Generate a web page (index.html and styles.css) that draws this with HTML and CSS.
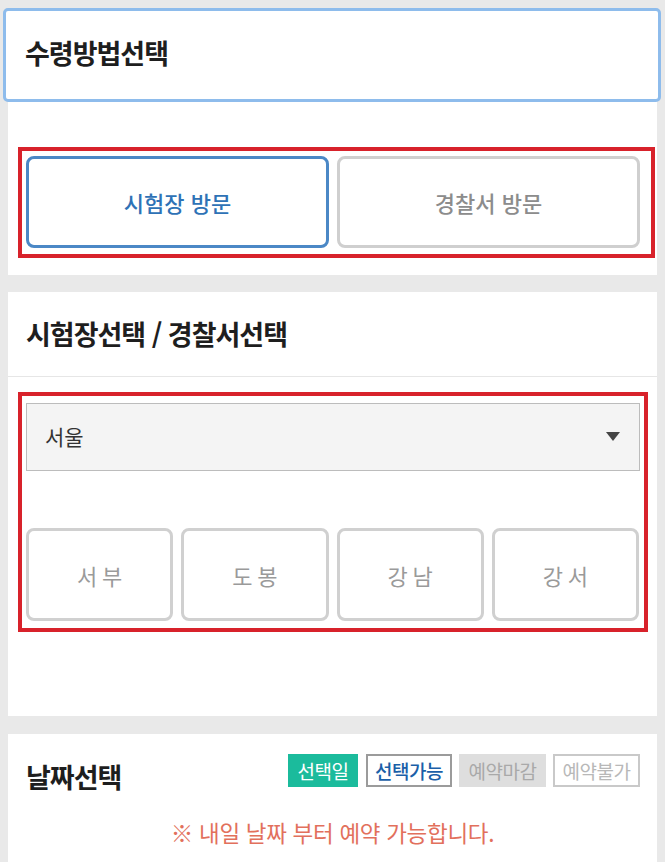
FILE: index.html
```html
<!DOCTYPE html>
<html lang="ko">
<head>
<meta charset="utf-8">
<title>수령방법선택</title>
<link rel="stylesheet" href="styles.css">
</head>
<body>
  <section class="card card-method">
    <div class="method-head">
      <h2 class="title">수령방법선택</h2>
    </div>
    <div class="mark mark-method">
      <button class="choice choice-on" type="button">시험장 방문</button>
      <button class="choice" type="button">경찰서 방문</button>
    </div>
  </section>

  <section class="card card-place">
    <div class="place-head">
      <h2 class="title">시험장선택 / 경찰서선택</h2>
    </div>
    <div class="mark mark-place">
      <div class="select">
        <span class="select-text">서울</span>
        <svg class="select-arrow" width="14" height="9" viewBox="0 0 14 9"><polygon points="0,0 14,0 7,9" fill="#444"/></svg>
      </div>
      <div class="regions">
        <button class="region" type="button">서부</button>
        <button class="region" type="button">도봉</button>
        <button class="region" type="button">강남</button>
        <button class="region" type="button">강서</button>
      </div>
    </div>
  </section>

  <section class="card card-date">
    <div class="date-head">
      <h2 class="title title-date">날짜선택</h2>
      <ul class="legend">
        <li class="tag tag-selected">선택일</li>
        <li class="tag tag-available">선택가능</li>
        <li class="tag tag-closed">예약마감</li>
        <li class="tag tag-unavailable">예약불가</li>
      </ul>
    </div>
    <p class="notice">※ 내일 날짜 부터 예약 가능합니다.</p>
  </section>
</body>
</html>
```

FILE: styles.css
```css
* {
  box-sizing: border-box;
}

html, body {
  margin: 0;
  padding: 0;
}

body {
  background: #e9e9e9;
  padding: 8px 8px 0 8px;
  font-family: "Noto Sans CJK KR", "Noto Sans", sans-serif;
  color: #222;
  height: 862px;
  overflow: hidden;
}

.card {
  background: #ffffff;
}

.title {
  margin: 0;
  font-size: 27px;
  font-weight: 700;
  color: #1e1e1e;
  letter-spacing: -1px;
  line-height: 1;
}

/* card 1 */
.card-method {
  padding-bottom: 17px;
}

.method-head {
  margin: 0 -4px 0 -5px;
  height: 94px;
  border: 3px solid #8ebcec;
  border-radius: 5px;
  background: #fff;
  display: flex;
  align-items: center;
  padding-left: 19px;
  padding-bottom: 6px;
}

.mark {
  border: 4px solid #d8222b;
}

.mark-method {
  margin: 45px 2px 0 10px;
  height: 111px;
  padding: 5px 11px 6px 4px;
  display: grid;
  grid-template-columns: 1fr 1fr;
  gap: 8px;
}

.choice {
  font-family: inherit;
  background: #fff;
  border: 3px solid #cfcfcf;
  border-radius: 8px;
  font-size: 22px;
  font-weight: 500;
  color: #8c8c8c;
  letter-spacing: 0;
  padding: 0;
  margin: 0;
}

.choice-on {
  border-color: #4b88c6;
  color: #2e72b6;
}

/* card 2 */
.card-place {
  margin-top: 17px;
  height: 424px;
}

.place-head {
  height: 85px;
  display: flex;
  align-items: center;
  padding-left: 18px;
  padding-bottom: 2px;
  border-bottom: 1px solid #e6e6e6;
}

.mark-place {
  margin: 15px 9px 0 10px;
  height: 240px;
  padding: 7px 4px 7px 4px;
  display: flex;
  flex-direction: column;
}

.select {
  height: 68px;
  background: #f4f4f4;
  border: 1px solid #bcbcbc;
  display: flex;
  align-items: center;
  justify-content: space-between;
  padding: 0 19px 2px 18px;
}

.select-text {
  font-size: 21px;
  color: #333;
}

.select-arrow {
  display: block;
}

.regions {
  margin-top: 57px;
  height: 93px;
  display: grid;
  grid-template-columns: repeat(4, 1fr);
  gap: 8px;
  padding-right: 1px;
}

.region {
  font-family: inherit;
  background: #fff;
  border: 3px solid #d0d0d0;
  border-radius: 8px;
  font-size: 22px;
  color: #9a9a9a;
  letter-spacing: 5px;
  text-indent: 5px;
  padding: 0;
  margin: 0;
}

/* card 3 */
.card-date {
  margin-top: 18px;
  height: 128px;
}

.date-head {
  display: flex;
  justify-content: space-between;
  align-items: flex-start;
  padding: 20px 17px 0 18px;
}

.title-date {
  margin-top: 9px;
}

.legend {
  list-style: none;
  margin: 0;
  padding: 0;
  display: flex;
  gap: 7px;
}

.tag {
  height: 33px;
  display: flex;
  align-items: center;
  justify-content: center;
  font-size: 19px;
  letter-spacing: -0.5px;
  border: 2px solid transparent;
  padding: 0 6px;
  white-space: nowrap;
}

.tag-selected {
  width: 70px;
  background: #1bbb9c;
  border-color: #1bbb9c;
  color: #fff;
  margin-right: 1px;
}

.tag-available {
  width: 86px;
  border-color: #9b9b9b;
  color: #1b5fa8;
  font-weight: 500;
}

.tag-closed {
  width: 87px;
  background: #dedede;
  border-color: #dedede;
  color: #a9a9a9;
}

.tag-unavailable {
  width: 87px;
  border-color: #c9c9c9;
  color: #b8b8b8;
}

.notice {
  margin: 29px 0 0 0;
  text-align: center;
  font-size: 22.5px;
  color: #e2705c;
  letter-spacing: -0.3px;
  line-height: 1.2;
}
```
